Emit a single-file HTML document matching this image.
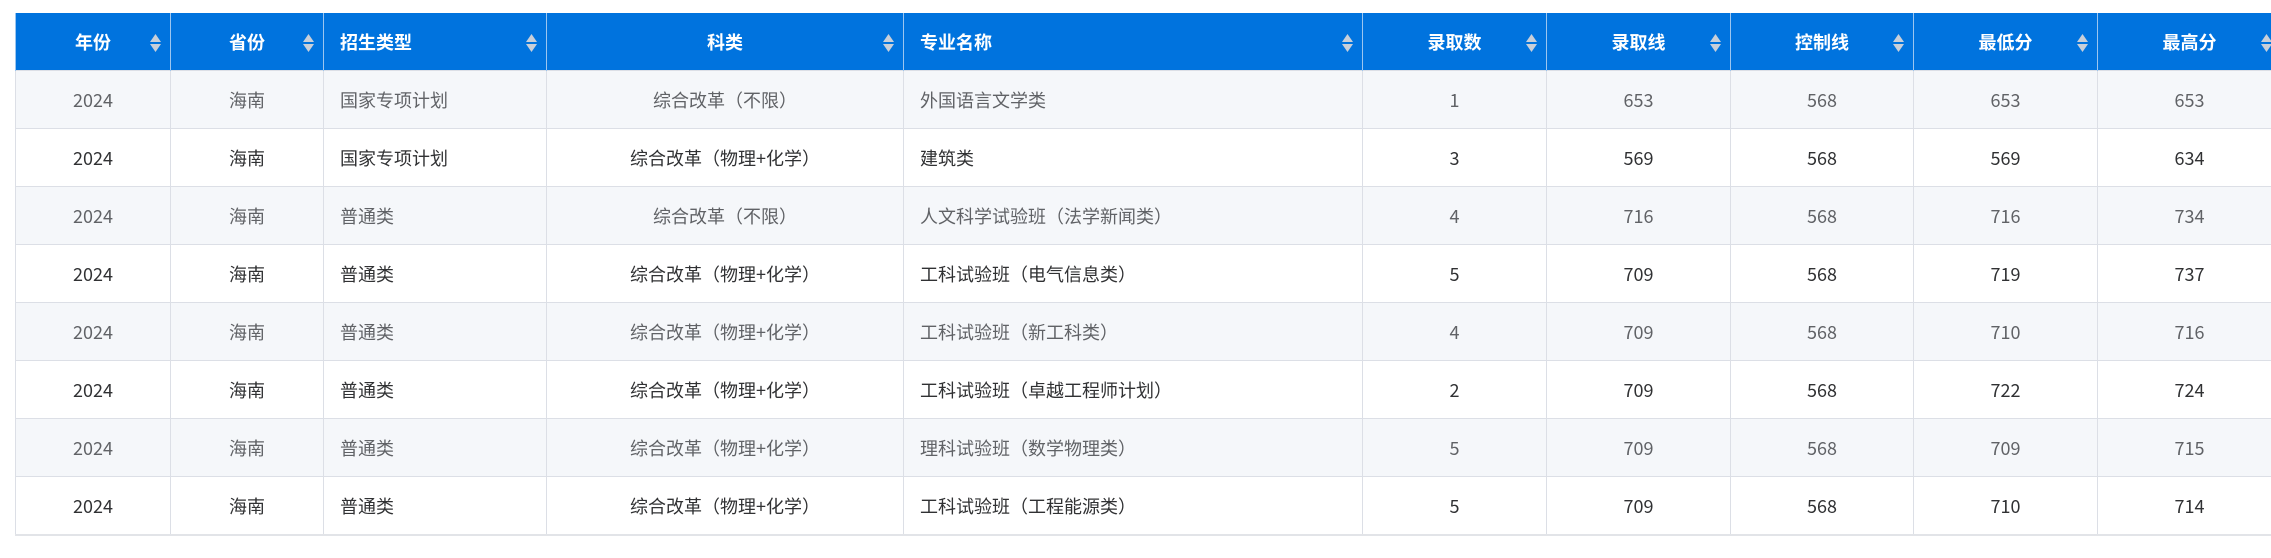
<!DOCTYPE html>
<html><head><meta charset="utf-8"><style>
html,body{margin:0;padding:0;background:#fff;width:2271px;height:558px;overflow:hidden}
table{position:absolute;left:15px;top:13px;border-collapse:collapse;table-layout:fixed;width:2390px;font-family:"Noto Sans CJK SC","Liberation Sans",sans-serif;font-size:18px}
th{background:#0073de;color:#fff;font-weight:bold;height:57px;padding:0;position:relative;border-left:1px solid #9cc6f0;border-right:1px solid #9cc6f0;text-align:center}
th.l{text-align:left;padding-left:16px}
th .s{position:absolute;right:8px;top:20px;width:13px;height:20px}
td{height:57px;border:1px solid #dcdfe6;text-align:center;padding:0;color:#303133;font-weight:normal}
td.l{text-align:left;padding-left:16px}
tr.o td{background:#f5f7fa;color:#606266}
tr:last-child td{border-bottom:2px solid #e2e4e8}
</style></head><body>
<table>
<colgroup><col style="width:155px"><col style="width:153px"><col style="width:223px"><col style="width:357px"><col style="width:459px"><col style="width:184px"><col style="width:184px"><col style="width:183px"><col style="width:184px"><col style="width:184px"><col style="width:124px"></colgroup>
<thead><tr>
<th>年份<svg class="s" viewBox="0 0 13 20"><path d="M6.5 1L12 9H1Z" fill="#c8cfd9"/><path d="M6.5 19L12 11H1Z" fill="#c8cfd9"/></svg></th>
<th>省份<svg class="s" viewBox="0 0 13 20"><path d="M6.5 1L12 9H1Z" fill="#c8cfd9"/><path d="M6.5 19L12 11H1Z" fill="#c8cfd9"/></svg></th>
<th class="l">招生类型<svg class="s" viewBox="0 0 13 20"><path d="M6.5 1L12 9H1Z" fill="#c8cfd9"/><path d="M6.5 19L12 11H1Z" fill="#c8cfd9"/></svg></th>
<th>科类<svg class="s" viewBox="0 0 13 20"><path d="M6.5 1L12 9H1Z" fill="#c8cfd9"/><path d="M6.5 19L12 11H1Z" fill="#c8cfd9"/></svg></th>
<th class="l">专业名称<svg class="s" viewBox="0 0 13 20"><path d="M6.5 1L12 9H1Z" fill="#c8cfd9"/><path d="M6.5 19L12 11H1Z" fill="#c8cfd9"/></svg></th>
<th>录取数<svg class="s" viewBox="0 0 13 20"><path d="M6.5 1L12 9H1Z" fill="#c8cfd9"/><path d="M6.5 19L12 11H1Z" fill="#c8cfd9"/></svg></th>
<th>录取线<svg class="s" viewBox="0 0 13 20"><path d="M6.5 1L12 9H1Z" fill="#c8cfd9"/><path d="M6.5 19L12 11H1Z" fill="#c8cfd9"/></svg></th>
<th>控制线<svg class="s" viewBox="0 0 13 20"><path d="M6.5 1L12 9H1Z" fill="#c8cfd9"/><path d="M6.5 19L12 11H1Z" fill="#c8cfd9"/></svg></th>
<th>最低分<svg class="s" viewBox="0 0 13 20"><path d="M6.5 1L12 9H1Z" fill="#c8cfd9"/><path d="M6.5 19L12 11H1Z" fill="#c8cfd9"/></svg></th>
<th>最高分<svg class="s" viewBox="0 0 13 20"><path d="M6.5 1L12 9H1Z" fill="#c8cfd9"/><path d="M6.5 19L12 11H1Z" fill="#c8cfd9"/></svg></th>
<th></th>
</tr></thead>
<tbody>
<tr class="o"><td>2024</td><td>海南</td><td class="l">国家专项计划</td><td>综合改革（不限）</td><td class="l">外国语言文学类</td><td>1</td><td>653</td><td>568</td><td>653</td><td>653</td><td></td></tr>
<tr><td>2024</td><td>海南</td><td class="l">国家专项计划</td><td>综合改革（物理+化学）</td><td class="l">建筑类</td><td>3</td><td>569</td><td>568</td><td>569</td><td>634</td><td></td></tr>
<tr class="o"><td>2024</td><td>海南</td><td class="l">普通类</td><td>综合改革（不限）</td><td class="l">人文科学试验班（法学新闻类）</td><td>4</td><td>716</td><td>568</td><td>716</td><td>734</td><td></td></tr>
<tr><td>2024</td><td>海南</td><td class="l">普通类</td><td>综合改革（物理+化学）</td><td class="l">工科试验班（电气信息类）</td><td>5</td><td>709</td><td>568</td><td>719</td><td>737</td><td></td></tr>
<tr class="o"><td>2024</td><td>海南</td><td class="l">普通类</td><td>综合改革（物理+化学）</td><td class="l">工科试验班（新工科类）</td><td>4</td><td>709</td><td>568</td><td>710</td><td>716</td><td></td></tr>
<tr><td>2024</td><td>海南</td><td class="l">普通类</td><td>综合改革（物理+化学）</td><td class="l">工科试验班（卓越工程师计划）</td><td>2</td><td>709</td><td>568</td><td>722</td><td>724</td><td></td></tr>
<tr class="o"><td>2024</td><td>海南</td><td class="l">普通类</td><td>综合改革（物理+化学）</td><td class="l">理科试验班（数学物理类）</td><td>5</td><td>709</td><td>568</td><td>709</td><td>715</td><td></td></tr>
<tr><td>2024</td><td>海南</td><td class="l">普通类</td><td>综合改革（物理+化学）</td><td class="l">工科试验班（工程能源类）</td><td>5</td><td>709</td><td>568</td><td>710</td><td>714</td><td></td></tr>
</tbody></table>
</body></html>
